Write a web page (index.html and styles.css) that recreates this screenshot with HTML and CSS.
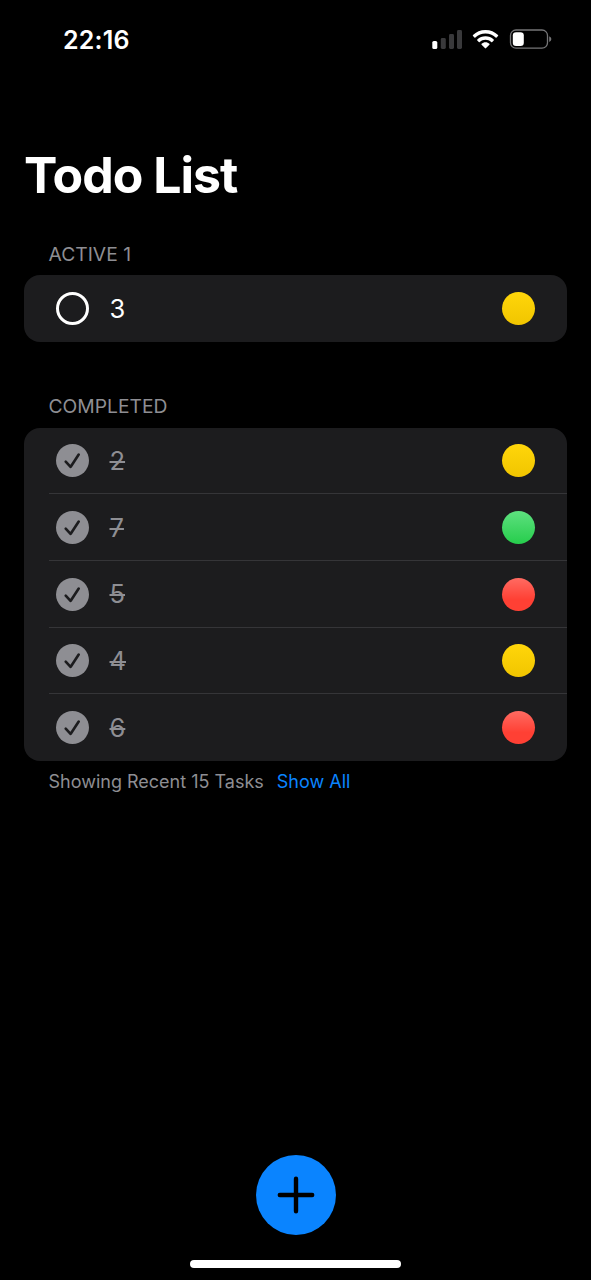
FILE: index.html
```html
<!DOCTYPE html>
<html lang="en">
<head>
<meta charset="utf-8">
<title>Todo List</title>
<link rel="stylesheet" href="styles.css">
</head>
<body>
<svg class="defs" width="0" height="0" aria-hidden="true">
  <symbol id="check" viewBox="0 0 34 34">
    <circle cx="17" cy="17" r="17" fill="#8e8e93"/>
    <path d="M10 18.200 L15 23.600 L23.400 10.900" fill="none" stroke="#1c1c1e" stroke-width="2.700" stroke-linecap="round" stroke-linejoin="round"/>
  </symbol>
</svg>
<div class="screen">
  <header class="status-bar">
    <span class="time">22:16</span>
    <svg class="status-icons" width="120" height="22" viewBox="0 0 120 22">
      <rect x="0.3" y="12" width="5" height="8" rx="1.6" fill="#fff"/>
      <rect x="8.8" y="9" width="5" height="11" rx="1.4" fill="#39393b"/>
      <rect x="17" y="5" width="5" height="15" rx="1.4" fill="#39393b"/>
      <rect x="25" y="1" width="5" height="19" rx="1.4" fill="#39393b"/>
      <g fill="#fff" stroke="none">
        <path d="M53.5 1 C58.5 1 62.8 2.9 66 6 Q66.5 6.5 66 7 L64.6 8.4 Q64.1 8.9 63.6 8.4 C60.8 5.8 57.5 4.5 53.5 4.5 C49.600 4.500 46.200 5.800 43.400 8.400 Q42.900 8.900 42.400 8.400 L41 7 Q40.500 6.500 41 6 C44.200 2.900 48.500 1 53.500 1 Z"/>
        <path d="M53.5 7.2 C56.700 7.200 59.500 8.400 61.700 10.400 Q62.200 10.900 61.700 11.400 L60.200 12.900 Q59.700 13.400 59.200 12.900 C57.600 11.500 55.700 10.800 53.500 10.800 C51.300 10.800 49.400 11.500 47.800 12.900 Q47.300 13.400 46.800 12.900 L45.300 11.400 Q44.800 10.900 45.300 10.400 C47.500 8.400 50.300 7.200 53.500 7.200 Z"/>
        <path d="M53.500 13.300 C55 13.300 56.400 13.900 57.400 14.800 Q57.900 15.300 57.400 15.800 L54.100 19.100 Q53.500 19.700 52.900 19.100 L49.600 15.800 Q49.100 15.300 49.600 14.800 C50.600 13.900 52 13.300 53.500 13.300 Z"/>
      </g>
      <rect x="78.500" y="1" width="37" height="18.200" rx="5.500" fill="none" stroke="#757577" stroke-width="1.300"/>
      <rect x="80.800" y="3.200" width="11" height="13.800" rx="3.300" fill="#fff"/>
      <path d="M117.200 7.200 Q119.400 8 119.400 10.100 Q119.400 12.200 117.200 13 Z" fill="#757577"/>
    </svg>
  </header>

  <main class="content">
    <h1 class="title">Todo List</h1>

    <section class="group">
      <h2 class="group-label">ACTIVE 1</h2>
      <ul class="card">
        <li class="row"><span class="ring"></span><span class="text">3</span><span class="dot yellow"></span></li>
      </ul>
    </section>

    <section class="group completed">
      <h2 class="group-label">COMPLETED</h2>
      <ul class="card">
        <li class="row"><svg class="check"><use href="#check"/></svg><span class="text done">2</span><span class="dot yellow"></span></li>
        <li class="row"><svg class="check"><use href="#check"/></svg><span class="text done">7</span><span class="dot green"></span></li>
        <li class="row"><svg class="check"><use href="#check"/></svg><span class="text done">5</span><span class="dot red"></span></li>
        <li class="row"><svg class="check"><use href="#check"/></svg><span class="text done">4</span><span class="dot yellow"></span></li>
        <li class="row"><svg class="check"><use href="#check"/></svg><span class="text done">6</span><span class="dot red"></span></li>
      </ul>
      <p class="footnote"><span>Showing Recent 15 Tasks</span><a class="link">Show All</a></p>
    </section>
  </main>

  <footer class="bottom">
    <button class="add" aria-label="Add task">
      <svg width="38" height="38" viewBox="0 0 38 38"><path d="M19 2.800 V35.200 M2.800 19 H35.200" stroke="#000" stroke-width="4.400" stroke-linecap="round"/></svg>
    </button>
    <div class="home-indicator"></div>
  </footer>
</div>
</body>
</html>
```
FILE: styles.css
```css
* { box-sizing: border-box; margin: 0; padding: 0; }
body { background: #000; font-family: Inter, "Liberation Sans", sans-serif; color: #fff; }
.defs { display: block; position: absolute; }
.screen { width: 591px; height: 1280px; display: flex; flex-direction: column; overflow: hidden; }

.status-bar { height: 80px; padding: 0 39px 0 63px; display: flex; align-items: center; justify-content: space-between; }
.time { font-size: 25px; font-weight: 600; line-height: 30px; letter-spacing: 0.200px; }
.status-icons { display: block; }

.content { flex: 1; padding: 65px 24.500px 0 24px; }
.title { font-size: 50px; line-height: 60px; font-weight: 700; letter-spacing: -1px; }
.group { padding-top: 36.500px; }
.group.completed { padding-top: 52px; }
.group-label { font-size: 19.300px; line-height: 24px; font-weight: 400; color: #8e8e93; padding-left: 24.500px; margin-bottom: 9.700px; }

.card { list-style: none; background: #1c1c1e; border-radius: 16px; }
.row { height: 66.700px; padding: 0 32px; display: flex; align-items: center; }
.row:not(:last-child) { background: linear-gradient(#353538, #353538) 24.500px 100% / 100% 1px no-repeat; }
.ring { width: 33px; height: 33px; border: 3px solid #fff; border-radius: 50%; }
.check { width: 33px; height: 33px; display: block; }
.text { margin-left: 20.500px; font-size: 25.500px; line-height: 32px; flex: 1; }
.done { color: #8e8e93; text-decoration: line-through; text-decoration-thickness: 1.500px; }
.dot { width: 33px; height: 33px; border-radius: 50%; }
.yellow { background: linear-gradient(#ffd60a, #f1c500); }
.green { background: linear-gradient(#5ee07f, #26cd4c); }
.red { background: linear-gradient(#ff6b62, #ff4034 65%); }

.footnote { display: flex; gap: 13px; padding: 8.500px 0 0 24.500px; font-size: 18px; line-height: 24px; color: #8e8e93; }
.link { color: #0a84ff; }

.bottom { height: 125px; display: flex; flex-direction: column; align-items: center; }
.add { width: 80px; height: 80px; border: 0; border-radius: 50%; background: #0a84ff; display: flex; align-items: center; justify-content: center; }
.home-indicator { width: 211px; height: 8px; border-radius: 4px; background: #fff; margin-top: 25px; }
```
